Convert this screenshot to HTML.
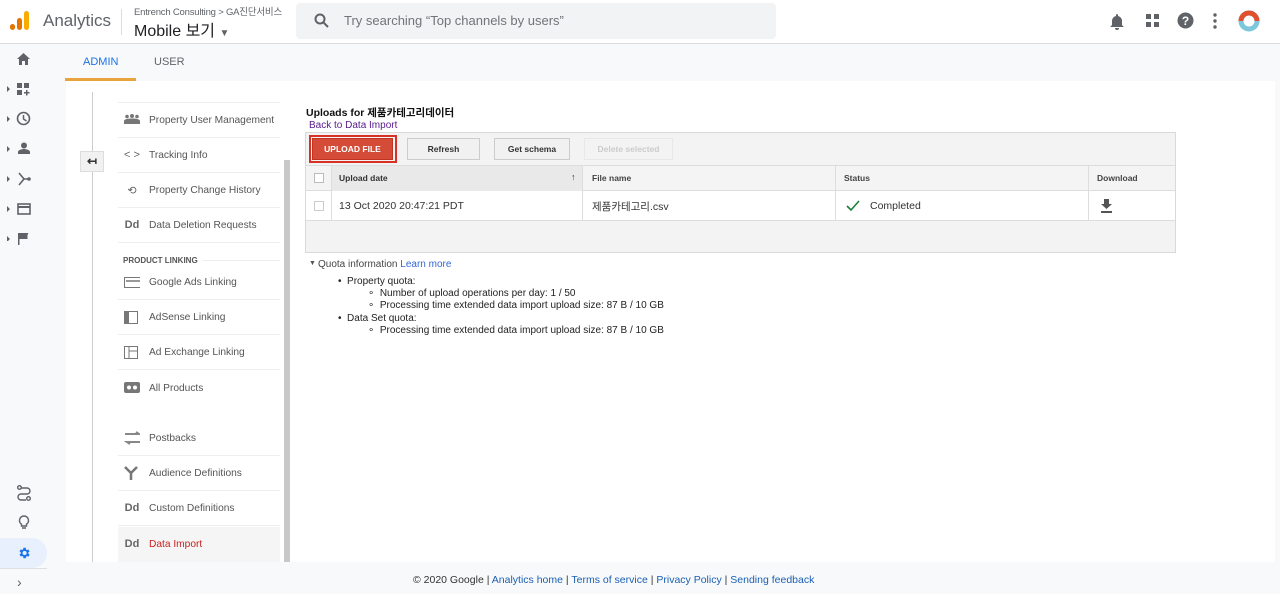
<!DOCTYPE html>
<html><head><meta charset="utf-8"><style>
*{box-sizing:border-box;margin:0;padding:0}
body{width:1280px;height:594px;overflow:hidden;background:#f8f9fa;font-family:"Liberation Sans","Noto Sans CJK KR",sans-serif;color:#333;position:relative}
.abs{position:absolute;white-space:nowrap}
#hdr{left:0;top:0;width:1280px;height:44px;background:#fff;border-bottom:1px solid #dadce0}
.ic{position:absolute;fill:#5f6368}
.mi{position:absolute;left:118px;width:162px;height:35px;border-bottom:1px solid #eee;font-size:10.2px;color:#555;white-space:nowrap}
.mi span{position:absolute;left:31px;top:12px}
.mi .g{position:absolute;left:6px;top:11px;font-weight:bold;font-size:11px;color:#666;width:16px;text-align:center}
.btn{position:absolute;top:138px;height:22px;border:1px solid #ccc;background:#f1f1f1;font-size:8.5px;font-weight:bold;color:#333;text-align:center;line-height:20px}
.q{font-size:10px;color:#222;position:absolute;white-space:nowrap}
</style></head><body>
<div id="hdr" class="abs">
 <svg class="abs" style="left:10px;top:10px" width="20" height="22"><rect x="0" y="14" width="5" height="6" rx="2.5" fill="#e37400"/><rect x="7" y="8" width="5" height="12" rx="2.5" fill="#e37400"/><rect x="14" y="1" width="5" height="19" rx="2.5" fill="#f9ab00"/></svg>
 <div class="abs" style="left:43px;top:11px;font-size:17px;color:#5f6368">Analytics</div>
 <div class="abs" style="left:121px;top:9px;width:1px;height:26px;background:#dadce0"></div>
 <div class="abs" style="left:134px;top:4px;font-size:9.5px;color:#5f6368;letter-spacing:-0.2px">Entrench Consulting &gt; GA진단서비스</div>
 <div class="abs" style="left:134px;top:17px;font-size:16px;color:#202124">Mobile 보기 <span style="font-size:10px;color:#5f6368">▼</span></div>
 <div class="abs" style="left:296px;top:3px;width:480px;height:36px;background:#f1f3f4;border-radius:4px">
  <svg class="abs" style="left:18px;top:10px" width="16" height="16"><circle cx="6" cy="6" r="4.5" stroke="#5f6368" stroke-width="2" fill="none"/><path d="M9.5 9.5L14 14" stroke="#5f6368" stroke-width="2"/></svg>
  <div class="abs" style="left:48px;top:10px;font-size:13px;color:#70757a">Try searching “Top channels by users”</div>
 </div>
 <svg class="ic" style="left:1109px;top:13px" width="16" height="17" viewBox="0 0 16 17"><path d="M8 1a1 1 0 0 1 1 1v1a5 5 0 0 1 4 5v4l1.5 1.5V14h-13v-.5L3 12V8a5 5 0 0 1 4-5V2a1 1 0 0 1 1-1zM6 15h4a2 2 0 0 1-4 0z"/></svg>
 <svg class="ic" style="left:1146px;top:14px" width="13" height="13"><rect x="0" y="0" width="5" height="5"/><rect x="8" y="0" width="5" height="5"/><rect x="0" y="8" width="5" height="5"/><rect x="8" y="8" width="5" height="5"/></svg>
 <svg class="abs" style="left:1177px;top:12px" width="17" height="17"><circle cx="8.5" cy="8.5" r="8" fill="#5f6368"/><text x="8.5" y="13" font-size="12" font-weight="bold" text-anchor="middle" fill="#fff" font-family="Liberation Sans">?</text></svg>
 <svg class="ic" style="left:1213px;top:13px" width="4" height="16"><circle cx="2" cy="2" r="1.7"/><circle cx="2" cy="8" r="1.7"/><circle cx="2" cy="14" r="1.7"/></svg>
 <svg class="abs" style="left:1237px;top:9px" width="24" height="24"><circle cx="12" cy="12" r="8" fill="none" stroke="#7cc7dc" stroke-width="5"/><path d="M4 12A8 8 0 0 1 20 12" fill="none" stroke="#e0502e" stroke-width="5"/></svg>
</div>
<svg class="ic" style="left:17px;top:53px" width="13" height="12"><path d="M6.5 0L13 6h-2v6H8V8H5v4H2V6H0z"/></svg>
<svg class="ic" style="left:17px;top:83px" width="14" height="13"><rect x="0" y="0" width="5" height="5"/><rect x="7" y="0" width="5" height="5"/><rect x="0" y="7" width="5" height="5"/><path d="M9 7h1.5v2h2v1.5h-2v2H9v-2H7V9h2z"/></svg>
<svg class="abs" style="left:16px;top:111px" width="15" height="15"><circle cx="7.5" cy="7.5" r="6" fill="none" stroke="#5f6368" stroke-width="1.6"/><path d="M7.5 4v4l3 2" fill="none" stroke="#5f6368" stroke-width="1.5"/></svg>
<svg class="ic" style="left:18px;top:142px" width="12" height="12"><circle cx="6" cy="3.5" r="3"/><path d="M0 12v-2c0-2 4-3 6-3s6 1 6 3v2z"/></svg>
<svg class="abs" style="left:17px;top:172px" width="14" height="14"><path d="M2 1l5 6-5 6M7 7h5" fill="none" stroke="#5f6368" stroke-width="1.6"/><circle cx="12" cy="7" r="1.8" fill="#5f6368"/></svg>
<svg class="abs" style="left:17px;top:203px" width="14" height="12"><rect x="1" y="1" width="12" height="10" fill="none" stroke="#5f6368" stroke-width="1.6"/><path d="M1 4h12" stroke="#5f6368" stroke-width="2"/></svg>
<svg class="ic" style="left:18px;top:233px" width="11" height="12"><path d="M0 0h1.5v12H0zM1.5 0h9l-1 2v4h-8z"/></svg>
<svg class="ic" style="left:7px;top:86px" width="4" height="155"><path d="M0 0l3 3-3 3zM0 30l3 3-3 3zM0 60l3 3-3 3zM0 90l3 3-3 3zM0 120l3 3-3 3zM0 150l3 3-3 3z"/></svg>
<svg class="abs" style="left:17px;top:485px" width="14" height="16"><circle cx="2.5" cy="2.5" r="1.8" fill="none" stroke="#5f6368" stroke-width="1.4"/><circle cx="11.5" cy="13.5" r="1.8" fill="none" stroke="#5f6368" stroke-width="1.4"/><path d="M4 3h6a3 3 0 0 1 0 6H4a3 3 0 0 0 0 6h5" fill="none" stroke="#5f6368" stroke-width="1.4"/></svg>
<svg class="abs" style="left:18px;top:515px" width="12" height="15"><path d="M6 1a4.5 4.5 0 0 0-2.5 8.2V11h5V9.2A4.5 4.5 0 0 0 6 1zM4 13h4" fill="none" stroke="#5f6368" stroke-width="1.4"/></svg>
<div class="abs" style="left:0;top:538px;width:47px;height:30px;background:#e8f0fe;border-radius:0 15px 15px 0"></div>
<svg class="abs" style="left:17px;top:546px" width="14" height="14" viewBox="0 0 24 24"><path fill="#1a73e8" d="M19.4 13a7.5 7.5 0 0 0 0-2l2.1-1.6-2-3.5-2.5 1a7 7 0 0 0-1.7-1L15 3h-4l-.4 2.7a7 7 0 0 0-1.7 1l-2.5-1-2 3.5L6.5 11a7.5 7.5 0 0 0 0 2l-2.1 1.6 2 3.5 2.5-1a7 7 0 0 0 1.7 1L11 21h4l.4-2.7a7 7 0 0 0 1.7-1l2.5 1 2-3.5zM13 15.5a3.5 3.5 0 1 1 0-7 3.5 3.5 0 0 1 0 7z"/></svg>
<div class="abs" style="left:0;top:568px;width:47px;height:1px;background:#e0e0e0"></div>
<div class="abs" style="left:17px;top:574px;font-size:14px;color:#5f6368">›</div>
<div class="abs" style="left:83px;top:56px;font-size:11px;color:#1a73e8">ADMIN</div>
<div class="abs" style="left:65px;top:78px;width:71px;height:3px;background:#e8a33d"></div>
<div class="abs" style="left:154px;top:56px;font-size:11px;color:#5f6368">USER</div>
<div class="abs" style="left:66px;top:81px;width:1209px;height:481px;background:#fff"></div>
<div class="abs" style="left:92px;top:92px;width:1px;height:470px;background:#ccc"></div>
<div class="abs" style="left:80px;top:151px;width:24px;height:21px;background:#f1f1f1;border:1px solid #ddd;font-size:12px;text-align:center;line-height:19px;font-weight:bold">↤</div>
<div class="abs" style="left:284px;top:160px;width:6px;height:402px;background:#c8c8c8"></div>
<div class="abs" style="left:118px;top:102px;width:162px;height:1px;background:#eee"></div>
<div class="mi" style="top:103px"><svg class="g" style="top:11px" width="16" height="10" viewBox="0 0 16 10"><circle cx="3" cy="2.5" r="1.8" fill="#777"/><circle cx="8" cy="2" r="2" fill="#777"/><circle cx="13" cy="2.5" r="1.8" fill="#777"/><path d="M0 10V7c0-1.5 3-2.5 8-2.5S16 5.5 16 7v3z" fill="#777"/></svg><span>Property User Management</span></div>
<div class="mi" style="top:138px"><div class="g" style="font-weight:normal">&lt; &gt;</div><span>Tracking Info</span></div>
<div class="mi" style="top:173px"><div class="g" style="font-weight:normal">⟲</div><span>Property Change History</span></div>
<div class="mi" style="top:208px"><div class="g">Dd</div><span>Data Deletion Requests</span></div>
<div class="abs" style="left:123px;top:256px;font-size:8px;font-weight:bold;color:#555">PRODUCT LINKING</div>
<div class="abs" style="left:202px;top:260px;width:78px;height:1px;background:#eee"></div>
<div class="mi" style="top:265px"><svg class="g" style="top:12px" width="18" height="11"><rect x=".5" y=".5" width="17" height="10" fill="#fff" stroke="#777"/><rect x="2" y="3" width="14" height="2" fill="#999"/></svg><span>Google Ads Linking</span></div>
<div class="mi" style="top:300px"><svg class="g" style="top:11px" width="14" height="13"><rect x=".5" y=".5" width="13" height="12" fill="none" stroke="#777"/><rect x="1" y="1" width="4" height="11" fill="#777"/></svg><span>AdSense Linking</span></div>
<div class="mi" style="top:335px"><svg class="g" style="top:11px" width="14" height="13"><rect x=".5" y=".5" width="13" height="12" fill="none" stroke="#777"/><path d="M5 1v12M5 5h8" stroke="#777"/></svg><span>Ad Exchange Linking</span></div>
<div class="mi" style="top:371px;border:none"><svg class="g" style="top:11px" width="16" height="11"><rect x="0" y="0" width="16" height="11" rx="2" fill="#777"/><circle cx="5" cy="5.5" r="2" fill="#fff"/><circle cx="11" cy="5.5" r="2" fill="#fff"/></svg><span>All Products</span></div>
<div class="mi" style="top:421px"><svg class="g" style="top:10px" width="18" height="14"><path d="M1 3h14l-3-2M17 11H3l3 2" fill="none" stroke="#888" stroke-width="2"/></svg><span>Postbacks</span></div>
<div class="mi" style="top:456px"><svg class="g" style="top:10px" width="14" height="14"><path d="M1 1l6 6 6-6M7 7v7" fill="none" stroke="#777" stroke-width="2.5"/></svg><span>Audience Definitions</span></div>
<div class="mi" style="top:491px"><div class="g">Dd</div><span>Custom Definitions</span></div>
<div class="mi" style="top:527px;background:#f5f5f5;height:35px;border:none"><div class="g">Dd</div><span style="color:#c5221f">Data Import</span></div>
<div class="abs" style="left:306px;top:105px;font-size:10.5px;font-weight:bold;color:#111">Uploads for 제품카테고리데이터</div>
<div class="abs" style="left:309px;top:120px;font-size:10px;color:#551a8b">Back to Data Import</div>
<div class="abs" style="left:305px;top:132px;width:871px;height:121px;background:#f3f3f3;border:1px solid #d9d9d9"></div>
<div class="abs" style="left:309px;top:135px;width:88px;height:28px;border:2px solid #d93025"></div>
<div class="btn" style="left:312px;width:81px;background:#d44b38;border-color:#c23321;color:#fff">UPLOAD FILE</div>
<div class="btn" style="left:407px;width:73px">Refresh</div>
<div class="btn" style="left:494px;width:76px">Get schema</div>
<div class="btn" style="left:584px;width:89px;color:#ccc;border-color:#e8e8e8;background:#f3f3f3">Delete selected</div>
<div class="abs" style="left:306px;top:165px;width:869px;height:56px;border-top:1px solid #ddd">
 <div class="abs" style="left:0;top:0;width:869px;height:25px;background:#f4f4f4;border-bottom:1px solid #ddd"></div>
 <div class="abs" style="left:25px;top:0;width:251px;height:25px;background:#e9e9e9"></div>
 <div class="abs" style="left:0;top:25px;width:869px;height:30px;background:#fff;border-bottom:1px solid #ddd"></div>
 <div class="abs" style="left:25px;top:0;width:1px;height:55px;background:#ddd"></div>
 <div class="abs" style="left:276px;top:0;width:1px;height:55px;background:#ddd"></div>
 <div class="abs" style="left:529px;top:0;width:1px;height:55px;background:#ddd"></div>
 <div class="abs" style="left:782px;top:0;width:1px;height:55px;background:#ddd"></div>
 <div class="abs" style="left:8px;top:7px;width:10px;height:10px;border:1px solid #bbb;background:#fff"></div>
 <div class="abs" style="left:8px;top:35px;width:10px;height:10px;border:1px solid #ccc;background:#fff"></div>
 <div class="abs" style="left:33px;top:7px;font-size:8.5px;font-weight:bold">Upload date</div>
 <div class="abs" style="left:265px;top:6px;font-size:9px;font-weight:bold">↑</div>
 <div class="abs" style="left:286px;top:7px;font-size:8.5px;font-weight:bold;color:#444">File name</div>
 <div class="abs" style="left:538px;top:7px;font-size:8.5px;font-weight:bold;color:#444">Status</div>
 <div class="abs" style="left:791px;top:7px;font-size:8.5px;font-weight:bold;color:#444">Download</div>
 <div class="abs" style="left:33px;top:34px;font-size:10.5px">13 Oct 2020 20:47:21 PDT</div>
 <div class="abs" style="left:286px;top:33px;font-size:10.5px">제품카테고리.csv</div>
 <svg class="abs" style="left:540px;top:34px" width="14" height="12"><path d="M1 6l4 4 8-9" fill="none" stroke="#188038" stroke-width="1.6"/></svg>
 <div class="abs" style="left:564px;top:34px;font-size:10.5px">Completed</div>
 <svg class="abs" style="left:795px;top:33px" width="11" height="14"><path d="M3 0h5v5h3L5.5 10 0 5h3z M0 12h11v2H0z" fill="#555"/></svg>
</div>
<div class="abs" style="left:309px;top:260px;font-size:7px;color:#555">▼</div>
<div class="q" style="left:318px;top:259px;color:#444">Quota information <span style="color:#3367d6">Learn more</span></div>
<div class="q" style="left:338px;top:276px">•&nbsp; Property quota:</div>
<div class="q" style="left:368px;top:288px">∘&nbsp; Number of upload operations per day: 1 / 50</div>
<div class="q" style="left:368px;top:300px">∘&nbsp; Processing time extended data import upload size: 87 B / 10 GB</div>
<div class="q" style="left:338px;top:313px">•&nbsp; Data Set quota:</div>
<div class="q" style="left:368px;top:325px">∘&nbsp; Processing time extended data import upload size: 87 B / 10 GB</div>
<div class="abs" style="left:413px;top:574px;font-size:10.5px;color:#333">© 2020 Google | <span style="color:#1a5fb4">Analytics home</span> | <span style="color:#1a5fb4">Terms of service</span> | <span style="color:#1a5fb4">Privacy Policy</span> | <span style="color:#1a5fb4">Sending feedback</span></div>
</body></html>
